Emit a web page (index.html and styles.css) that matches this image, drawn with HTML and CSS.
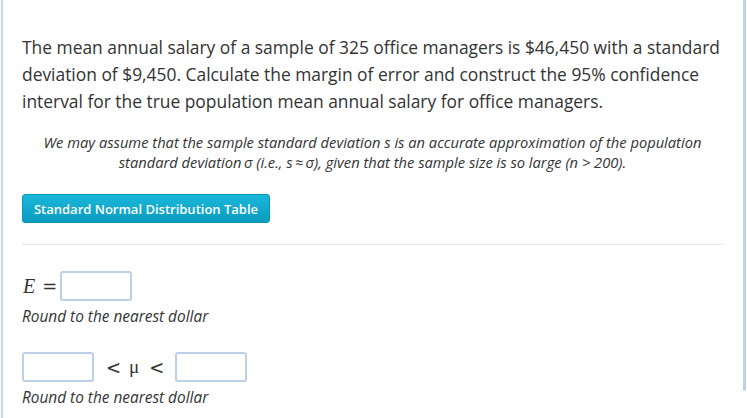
FILE: index.html
```html
<!DOCTYPE html>
<html>
<head>
<meta charset="utf-8">
<link rel="stylesheet" href="styles.css">
</head>
<body>
<div class="frame">
  <div class="left-rule"></div>
  <main class="content">
    <p class="question">The mean annual salary of a sample of 325 office managers is $46,450 with a standard deviation of $9,450. Calculate the margin of error and construct the 95% confidence interval for the true population mean annual salary for office managers.</p>
    <p class="note">We may assume that the sample standard deviation s is an accurate approximation of the population standard deviation&thinsp;σ (i.e., s&thinsp;≈&thinsp;σ), given that the sample size is so large (n &gt; 200).</p>
    <button class="btn">Standard Normal Distribution Table</button>
    <hr class="sep">
    <div class="row">
      <span class="math-e">E</span><span class="eq">=</span><span class="box"></span>
    </div>
    <p class="hint">Round to the nearest dollar</p>
    <div class="row row-ci">
      <span class="box"></span><span class="rel rel-lo">&lt;</span><span class="mu">μ</span><span class="rel rel-hi">&lt;</span><span class="box"></span>
    </div>
    <p class="hint">Round to the nearest dollar</p>
  </main>
  <div class="right-rule"></div>
</div>
</body>
</html>
```

FILE: styles.css
```css
html, body {
  margin: 0;
  padding: 0;
  background: #fff;
}
body {
  width: 747px;
  height: 418px;
  overflow: hidden;
  font-family: "Open Sans", "Liberation Sans", sans-serif;
  color: #333;
}
.frame {
  display: flex;
  height: 418px;
}
.left-rule {
  width: 2px;
  margin-left: 1px;
  background: #c3d5ef;
  flex: none;
}
.content {
  flex: 1;
  padding: 34px 20px 0 19px;
}
.right-rule {
  width: 3px;
  height: 391px;
  margin-right: 1px;
  background: #bfd2ee;
  border-radius: 0 0 2px 2px;
  flex: none;
}
.question {
  margin: 0;
  font-size: 17.4px;
  line-height: 27px;
  color: #333;
}
.note {
  margin: 18px 0 0;
  text-align: center;
  font-style: italic;
  font-size: 14.7px;
  line-height: 19.5px;
  padding: 0 6px;
  color: #333;
}
.btn {
  display: block;
  margin-top: 22px;
  width: 248px;
  height: 29px;
  padding: 0;
  border: 1px solid #0b95b6;
  border-radius: 3px;
  background: linear-gradient(#1ab7da, #0a9cbf);
  color: #fff;
  font-family: "Open Sans", "Liberation Sans", sans-serif;
  font-size: 13px;
  font-weight: 600;
  letter-spacing: 0;
}
.sep {
  margin: 21px 0 0;
  border: 0;
  border-top: 1px solid #e9e9e9;
}
.row {
  display: flex;
  align-items: center;
  margin-top: 26px;
  height: 30px;
}
.math-e {
  font-family: "Liberation Serif", "DejaVu Serif", serif;
  font-style: italic;
  font-size: 20px;
  color: #333;
  margin-left: 1px;
}
.eq {
  font-family: "DejaVu Serif", "Liberation Serif", serif;
  font-size: 18px;
  margin: 0 3px 0 7px;
  color: #333;
}
.box {
  display: block;
  width: 68px;
  height: 26px;
  border: 2px solid #bcd0ea;
  border-radius: 3px;
  background: #fff;
}
.rel {
  font-family: "DejaVu Serif", "Liberation Serif", serif;
  font-size: 18px;
  color: #333;
}
.rel-lo {
  margin: 0 8px 0 12px;
}
.rel-hi {
  margin: 0 11px 0 10px;
}
.mu {
  font-family: "Liberation Serif", "DejaVu Serif", serif;
  font-size: 19px;
  color: #333;
}
.hint {
  margin: 7px 0 0;
  font-size: 15.4px;
  font-style: italic;
  line-height: 18px;
  color: #333;
}
.row-ci {
  margin-top: 26px;
}
```
